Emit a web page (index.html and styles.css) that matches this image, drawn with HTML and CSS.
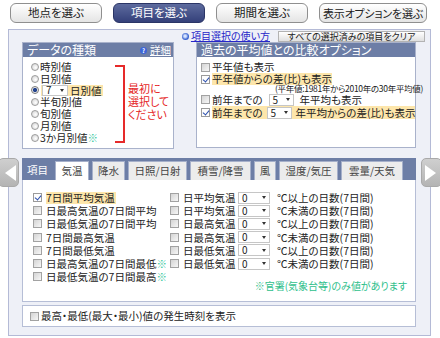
FILE: index.html
```html
<!DOCTYPE html>
<html lang="ja">
<head>
<meta charset="utf-8">
<title>項目を選ぶ</title>
<link rel="stylesheet" href="styles.css">
</head>
<body>
<nav class="steps">
  <span class="step">地点を選ぶ</span>
  <span class="step active">項目を選ぶ</span>
  <span class="step">期間を選ぶ</span>
  <span class="step wide">表示オプションを選ぶ</span>
</nav>
<main class="frame">
  <div class="toolbar">
    <a class="help" href="#"><i class="info"></i>項目選択の使い方</a>
    <span class="clear">すべての選択済みの項目をクリア</span>
  </div>
  <div class="upper">
    <section class="box kind">
      <header class="box-head"><span>データの種類</span><span class="detail"><i class="q">?</i><u>詳細</u></span></header>
      <div class="kind-body">
        <ul class="radios">
          <li><i class="rb"></i>時別値</li>
          <li><i class="rb"></i>日別値</li>
          <li><i class="rb on"></i><span class="hl"><span class="sel s7"><span>7</span><i class="caret"></i></span>日別値</span></li>
          <li><i class="rb"></i>半旬別値</li>
          <li><i class="rb"></i>旬別値</li>
          <li><i class="rb"></i>月別値</li>
          <li><i class="rb"></i><span>3か月別値<span class="mark">※</span></span></li>
        </ul>
        <span class="bracket"></span>
        <p class="notice">最初に<br>選択して<br>ください</p>
      </div>
    </section>
    <section class="box compare">
      <header class="box-head"><span>過去の平均値との比較オプション</span></header>
      <div class="opts">
        <div class="opt"><i class="cb"></i>平年値も表示</div>
        <div class="opt"><i class="cb on"></i><span class="hl">平年値からの差(比)も表示</span></div>
        <div class="opt-note">(平年値:1981年から2010年の30年平均値)</div>
        <div class="opt tall"><i class="cb"></i>前年までの<span class="sel s5"><span>5</span><i class="caret"></i></span>年平均も表示</div>
        <div class="opt tall"><i class="cb on"></i><span class="hl">前年までの<span class="sel s5"><span>5</span><i class="caret"></i></span>年平均からの差(比)も表示</span></div>
      </div>
    </section>
  </div>
  <div class="tabs-wrap">
    <span class="arrow prev"></span>
    <div class="tabbar">
      <span class="tab-label">項目</span>
      <span class="tab on w34">気温</span>
      <span class="tab w33">降水</span>
      <span class="tab w59">日照/日射</span>
      <span class="tab w61">積雪/降雪</span>
      <span class="tab w22">風</span>
      <span class="tab w59">湿度/気圧</span>
      <span class="tab w62">雲量/天気</span>
    </div>
    <span class="arrow next"></span>
  </div>
  <div class="items">
    <div class="cols">
      <ul class="col1">
        <li><i class="cb on"></i><span class="hl">7日間平均気温</span></li>
        <li><i class="cb"></i>日最高気温の7日間平均</li>
        <li><i class="cb"></i>日最低気温の7日間平均</li>
        <li><i class="cb"></i>7日間最高気温</li>
        <li><i class="cb"></i>7日間最低気温</li>
        <li><i class="cb"></i><span>日最高気温の7日間最低<span class="mark">※</span></span></li>
        <li><i class="cb"></i><span>日最低気温の7日間最高<span class="mark">※</span></span></li>
      </ul>
      <ul class="col2">
        <li><i class="cb"></i><span class="lbl">日平均気温</span><span class="sel s0"><span>0</span><i class="caret"></i></span>℃以上の日数(7日間)</li>
        <li><i class="cb"></i><span class="lbl">日平均気温</span><span class="sel s0"><span>0</span><i class="caret"></i></span>℃未満の日数(7日間)</li>
        <li><i class="cb"></i><span class="lbl">日最高気温</span><span class="sel s0"><span>0</span><i class="caret"></i></span>℃以上の日数(7日間)</li>
        <li><i class="cb"></i><span class="lbl">日最高気温</span><span class="sel s0"><span>0</span><i class="caret"></i></span>℃未満の日数(7日間)</li>
        <li><i class="cb"></i><span class="lbl">日最低気温</span><span class="sel s0"><span>0</span><i class="caret"></i></span>℃以上の日数(7日間)</li>
        <li><i class="cb"></i><span class="lbl">日最低気温</span><span class="sel s0"><span>0</span><i class="caret"></i></span>℃未満の日数(7日間)</li>
      </ul>
    </div>
    <p class="note">※官署(気象台等)のみ値があります</p>
  </div>
  <div class="extra"><i class="cb"></i>最高・最低(最大・最小)値の発生時刻を表示</div>
</main>
</body>
</html>
```
FILE: styles.css
```css
* { box-sizing: border-box; margin: 0; padding: 0; }
html, body { width: 440px; height: 338px; overflow: hidden; background: #fff; }
body {
  font-family: "Noto Sans CJK JP", "Noto Sans", sans-serif;
  font-size: 10.5px;
  color: #222;
  font-feature-settings: "palt";
  line-height: 1;
  white-space: nowrap;
}
ul { list-style: none; }
i { font-style: normal; display: block; flex: none; }

/* step buttons */
.steps { display: flex; justify-content: space-between; padding: 3px 13px 0 10px; height: 23px; }
.step {
  width: 92px; height: 20px;
  border: 1px solid #8f8f8f; border-radius: 6px;
  background: linear-gradient(#ffffff, #e4e4e4);
  display: flex; align-items: center; justify-content: center;
  font-size: 11.5px; color: #222;
}
.step.active { background: linear-gradient(#5d6b9e, #34407a); border-color: #2b3566; color: #fff; }
.step.wide { width: 108px; font-size: 11px; letter-spacing: -0.2px; }

/* frame */
.frame {
  display: block;
  margin: 6px 9px 0 8px; height: 307px;
  border: 1px solid #b4bad6; background: #eef0f7;
  padding: 0 14px 8px 13px;
}
.toolbar { display: flex; justify-content: flex-end; align-items: center; height: 12px; margin-right: -9px; gap: 8px; }
.help { display: flex; align-items: center; gap: 2px; color: #2626c8; text-decoration: underline; font-size: 10px; line-height: 12px; }
.info { width: 7px; height: 7px; border-radius: 50%; background: radial-gradient(circle at 45% 45%, #d6e4ff 0 20%, #3a64d0 60%); }
.clear {
  width: 147px; height: 11px;
  border: 1px solid #b3b3b3; background: linear-gradient(#ffffff, #e0e0e0);
  font-size: 9px; display: flex; align-items: center; justify-content: center; color: #222;
}

.upper { display: flex; gap: 22px; height: 107px; }
.box { background: #fff; border: 1px solid #a9b2cb; }
.kind { width: 152px; }
.compare { width: 220px; height: 106px; }
.box-head {
  height: 14px; background: #6d7ea6; color: #fff; font-size: 12px; line-height: 14px;
  display: flex; align-items: center; justify-content: space-between; padding: 0 2px 0 4px;
}
.detail { display: flex; align-items: center; gap: 3px; font-size: 10.5px; }
.q {
  width: 7px; height: 7px; border-radius: 50%; background: #3d66d8; color: #fff;
  font-size: 6px; line-height: 7px; font-weight: bold; display: flex; align-items: center; justify-content: center;
}

.kind-body { display: flex; }
.radios { width: 92px; padding: 4px 0 0 8px; }
.radios li { display: flex; align-items: center; height: 11.8px; line-height: 11.8px; gap: 1px; }
.rb {
  width: 8px; height: 8px; border-radius: 50%; border: 1px solid #9c9c9c;
  background: radial-gradient(circle at 60% 60%, #ffffff, #cfcfcf);
}
.rb.on { background: radial-gradient(circle, #24448e 0 1.8px, #eaeaea 2.4px); border-color: #7a7a7a; }
.hl { background: #fde6ab; display: flex; align-items: center; }
.radios .hl { padding: 0 1px 0 1px; height: 11px; margin-left: 1px; }
.sel {
  display: flex; align-items: center; justify-content: space-between;
  background: #fff; border: 1px solid #c6c6c6; padding: 0 3px 0 3px; font-size: 10px; line-height: 10px;
}
.caret { width: 0; height: 0; border-left: 2.5px solid transparent; border-right: 2.5px solid transparent; border-top: 3px solid #333; }
.s7 { width: 26px; height: 11px; margin-right: 2px; }
.s5 { width: 25px; height: 12px; margin: 0 4px; }
.s0 { width: 32px; height: 12px; margin-right: 3px; }
.mark { color: #33c69a; }

.bracket {
  width: 10px; height: 78px; margin-top: 8px;
  border: 2px solid #e62a2a; border-left: none;
}
.notice { margin: 25px 0 0 3px; line-height: 13px; color: #e52626; font-size: 11px; }

.opts { padding: 4px 0 0 4px; }
.opt { display: flex; align-items: center; height: 12px; line-height: 12px; gap: 2px; }
.opt.tall { height: 13px; line-height: 13px; }
.opt-note { font-size: 8.5px; height: 9px; line-height: 9px; padding-left: 74px; margin-top: -1px; letter-spacing: -0.3px; }
.cb {
  width: 9px; height: 9px; border: 1px solid #a2a2a2; position: relative;
  background: linear-gradient(135deg, #d4d4d4, #f7f7f7);
}
.cb.on { background: #fdfdfd; border-color: #9a9a9a; }
.cb.on::after {
  content: ""; position: absolute; left: 2px; top: 0px; width: 3px; height: 5px;
  border: solid #2b4fae; border-width: 0 1.5px 1.5px 0; transform: rotate(40deg);
}

/* tabs */
.tabs-wrap { position: relative; margin-top: 9px; height: 22px; }
.tabbar { display: flex; align-items: flex-end; gap: 3px; height: 22px; background: #6d7ea6; }
.tab-label { width: 30px; height: 19px; padding-left: 5px; color: #fff; display: flex; align-items: center; }
.tab {
  height: 19px; border: 1px solid #a6b0ca; border-bottom: none; background: #ececec; color: #444;
  display: flex; align-items: center; justify-content: center; padding-top: 1px;
}
.tab.on { background: #fff; }
.w22 { width: 22px; } .w33 { width: 33px; } .w34 { width: 34px; }
.w59 { width: 59px; } .w61 { width: 61px; } .w62 { width: 62px; }
.arrow {
  position: absolute; top: 0; width: 21px; height: 29px; border-radius: 5px;
  background: linear-gradient(#cfcfcf, #b4b4b4); border: 1px solid #a9a9a9;
  display: flex; align-items: center; justify-content: center;
}
.arrow.prev { left: -24px; padding-left: 4px; }
.arrow.next { right: -26px; padding-right: 2px; }
.arrow.prev::before { content: ""; border-top: 8.5px solid transparent; border-bottom: 8.5px solid transparent; border-right: 11px solid #fff; }
.arrow.next::before { content: ""; border-top: 8.5px solid transparent; border-bottom: 8.5px solid transparent; border-left: 11px solid #fff; }

/* items */
.items { height: 122px; background: #fff; border: 1px solid #b6bed6; border-top: none; padding: 11px 8px 0 10px; }
.cols { display: flex; }
.col1 { width: 137px; }
.col1 li, .col2 li { display: flex; align-items: center; height: 13.2px; line-height: 13.2px; gap: 4px; }
.col1 .hl { height: 12px; padding-right: 1px; }
.col2 .lbl { width: 51px; }
.note { text-align: right; color: #2fc08c; font-size: 10px; margin-top: -2px; line-height: 10px; }

.extra {
  display: flex; align-items: center; gap: 2px; margin-top: 3px; height: 22px;
  background: #fff; border: 1px solid #b6bed6; padding-left: 7px;
}
```
